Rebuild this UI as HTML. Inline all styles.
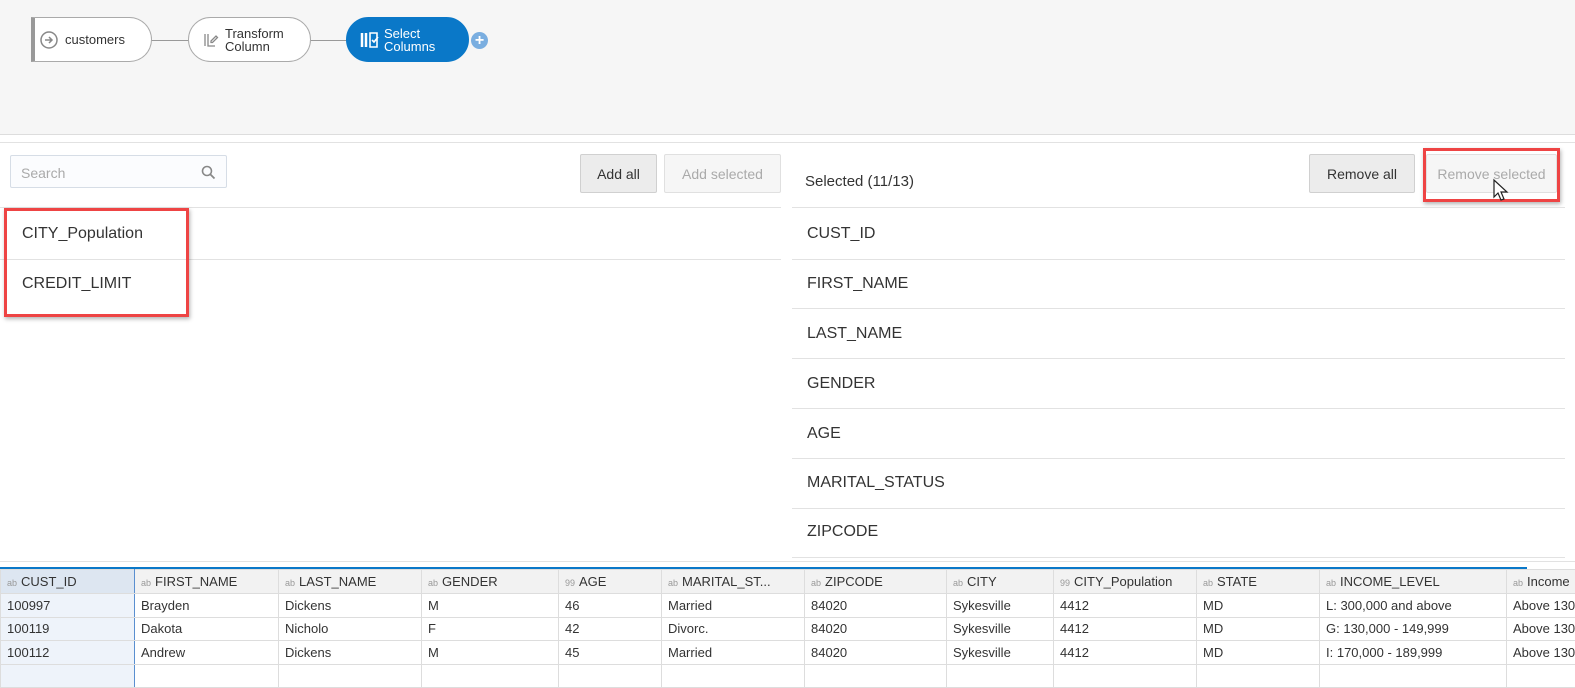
<!DOCTYPE html>
<html><head><style>
*{margin:0;padding:0;box-sizing:border-box}
body{width:1575px;height:670px;overflow:hidden;background:#fff;font-family:"Liberation Sans",sans-serif;color:#333;position:relative}
.a{position:absolute}
.node{position:absolute;top:17px;height:45px;border:1px solid #aaa;border-radius:0 23px 23px 0;background:#fff;font-size:13px;color:#333;display:flex;align-items:center}
.btn{position:absolute;height:39px;border:1px solid #d0d0d0;border-radius:2px;background:#ececec;font-size:14px;display:flex;align-items:center;justify-content:center}
.row{position:absolute;height:1px;background:#e2e2e2}
.it{position:absolute;font-size:16px;color:#333}
table{position:absolute;left:0;top:569px;width:1586px;border-collapse:collapse;font-size:13px;table-layout:fixed}
td{border:1px solid #ddd;height:23.5px;padding:0 6px;white-space:nowrap;overflow:hidden;color:#333}
tr.h td{background:#f2f2f2;height:24px}
tr.h td:first-child{background:#dde6f1}
td:first-child{background:#eef3fa;border-right:1px solid #5a8fd0}
.t{font-size:9px;color:#999;margin-right:4px}
</style></head><body>
<div class="a" style="left:0;top:0;width:1575px;height:135px;background:#f6f6f6;border-bottom:1px solid #ddd"></div>
<div class="a" style="left:0;top:142px;width:1575px;height:1px;background:#e2e2e2"></div>
<div class="a" style="left:150px;top:40px;width:40px;height:1px;background:#999"></div>
<div class="a" style="left:309px;top:40px;width:40px;height:1px;background:#999"></div>
<div class="node" style="left:31px;width:121px;border-left:4px solid #999;border-radius:0 23px 23px 0">
<svg width="20" height="20" style="margin:0 6px 0 4px" viewBox="0 0 20 20"><circle cx="10" cy="10" r="8" fill="none" stroke="#888" stroke-width="1.5"/><path d="M6 10h7M10 7l3 3-3 3" stroke="#888" fill="none" stroke-width="1.5"/></svg>customers</div>
<div class="node" style="left:188px;width:123px;border-radius:23px">
<svg width="16" height="16" style="margin:0 6px 0 14px" viewBox="0 0 16 16"><path d="M2 2v12M5 2v12h7M8 9l5-5 1.5 1.5-5 5H8z" stroke="#888" fill="none" stroke-width="1.3"/></svg><span style="line-height:13px">Transform<br>Column</span></div>
<div class="node" style="left:346px;width:123px;border-radius:23px;background:#0a78c8;border-color:#0a78c8;color:#fff">
<svg width="20" height="18" style="margin:0 4px 0 13px" viewBox="0 0 20 18"><path d="M2 2v14M6 2v14" stroke="#fff" stroke-width="2.5"/><path d="M10 2h7v14h-7zM12 9l2 2 4-5" stroke="#fff" fill="none" stroke-width="1.6"/></svg><span style="line-height:13px">Select<br>Columns</span></div>
<div class="a" style="left:471px;top:32px;width:17px;height:17px;border-radius:50%;background:#7aaee0;color:#fff;font-size:16px;font-weight:bold;text-align:center;line-height:17px">+</div>
<div class="a" style="left:10px;top:155px;width:217px;height:33px;border:1px solid #d6dde6;border-radius:2px;background:#fbfcfe;font-size:14px;color:#aaa;padding:9px 10px">Search
<svg class="a" style="right:10px;top:9px" width="15" height="15" viewBox="0 0 15 15"><circle cx="6" cy="6" r="4.5" fill="none" stroke="#888" stroke-width="1.6"/><path d="M9.5 9.5l4 4" stroke="#888" stroke-width="1.8"/></svg></div>
<div class="btn" style="left:580px;top:154px;width:77px">Add all</div>
<div class="btn" style="left:664px;top:154px;width:117px;background:#f6f6f6;color:#aaa;border-color:#e0e0e0">Add selected</div>
<div class="row" style="left:0;top:207px;width:781px"></div>
<div class="row" style="left:0;top:259px;width:781px"></div>
<div class="it" style="left:22px;top:225px">CITY_Population</div>
<div class="it" style="left:22px;top:275px">CREDIT_LIMIT</div>
<div class="a" style="left:4px;top:208px;width:185px;height:109px;border:3px solid #ee4444;box-shadow:1px 2px 4px rgba(0,0,0,.3)"></div>
<div class="a" style="left:805px;top:173px;font-size:15px">Selected (11/13)</div>
<div class="btn" style="left:1309px;top:154px;width:106px">Remove all</div>
<div class="btn" style="left:1426px;top:154px;width:131px;background:#f6f6f6;color:#aaa;border-color:#e0e0e0">Remove selected</div>
<div class="a" style="left:1423px;top:148px;width:137px;height:54px;border:3px solid #ee4444;box-shadow:1px 2px 4px rgba(0,0,0,.3)"></div>
<svg class="a" style="left:1492px;top:178px" width="20" height="26" viewBox="0 0 20 26"><path d="M2 2v17l4-4 3 7 3-1-3-7h6z" fill="#fff" stroke="#222" stroke-width="1.2"/></svg>
<div class="row" style="left:792px;top:207px;width:773px"></div>
<div class="row" style="left:792px;top:259px;width:773px"></div>
<div class="row" style="left:792px;top:308px;width:773px"></div>
<div class="row" style="left:792px;top:358px;width:773px"></div>
<div class="row" style="left:792px;top:408px;width:773px"></div>
<div class="row" style="left:792px;top:458px;width:773px"></div>
<div class="row" style="left:792px;top:508px;width:773px"></div>
<div class="row" style="left:792px;top:557px;width:773px"></div>
<div class="it" style="left:807px;top:225px">CUST_ID</div>
<div class="it" style="left:807px;top:275px">FIRST_NAME</div>
<div class="it" style="left:807px;top:325px">LAST_NAME</div>
<div class="it" style="left:807px;top:375px">GENDER</div>
<div class="it" style="left:807px;top:425px">AGE</div>
<div class="it" style="left:807px;top:474px">MARITAL_STATUS</div>
<div class="it" style="left:807px;top:523px">ZIPCODE</div>
<div class="row" style="left:0;top:561px;width:1575px"></div>
<div class="a" style="left:0;top:567px;width:1527px;height:3px;background:#0a78c8"></div>
<table>
<colgroup><col style="width:134px"><col style="width:144px"><col style="width:143px"><col style="width:137px"><col style="width:103px"><col style="width:143px"><col style="width:142px"><col style="width:107px"><col style="width:143px"><col style="width:123px"><col style="width:187px"><col style="width:80px"></colgroup>
<tr class="h"><td><span class="t">ab</span>CUST_ID</td><td><span class="t">ab</span>FIRST_NAME</td><td><span class="t">ab</span>LAST_NAME</td><td><span class="t">ab</span>GENDER</td><td><span class="t">99</span>AGE</td><td><span class="t">ab</span>MARITAL_ST...</td><td><span class="t">ab</span>ZIPCODE</td><td><span class="t">ab</span>CITY</td><td><span class="t">99</span>CITY_Population</td><td><span class="t">ab</span>STATE</td><td><span class="t">ab</span>INCOME_LEVEL</td><td><span class="t">ab</span>Income</td></tr>
<tr><td>100997</td><td>Brayden</td><td>Dickens</td><td>M</td><td>46</td><td>Married</td><td>84020</td><td>Sykesville</td><td>4412</td><td>MD</td><td>L: 300,000 and above</td><td>Above 130</td></tr>
<tr><td>100119</td><td>Dakota</td><td>Nicholo</td><td>F</td><td>42</td><td>Divorc.</td><td>84020</td><td>Sykesville</td><td>4412</td><td>MD</td><td>G: 130,000 - 149,999</td><td>Above 130</td></tr>
<tr><td>100112</td><td>Andrew</td><td>Dickens</td><td>M</td><td>45</td><td>Married</td><td>84020</td><td>Sykesville</td><td>4412</td><td>MD</td><td>I: 170,000 - 189,999</td><td>Above 130</td></tr>
<tr><td></td><td></td><td></td><td></td><td></td><td></td><td></td><td></td><td></td><td></td><td></td><td></td></tr>
</table>
</body></html>
